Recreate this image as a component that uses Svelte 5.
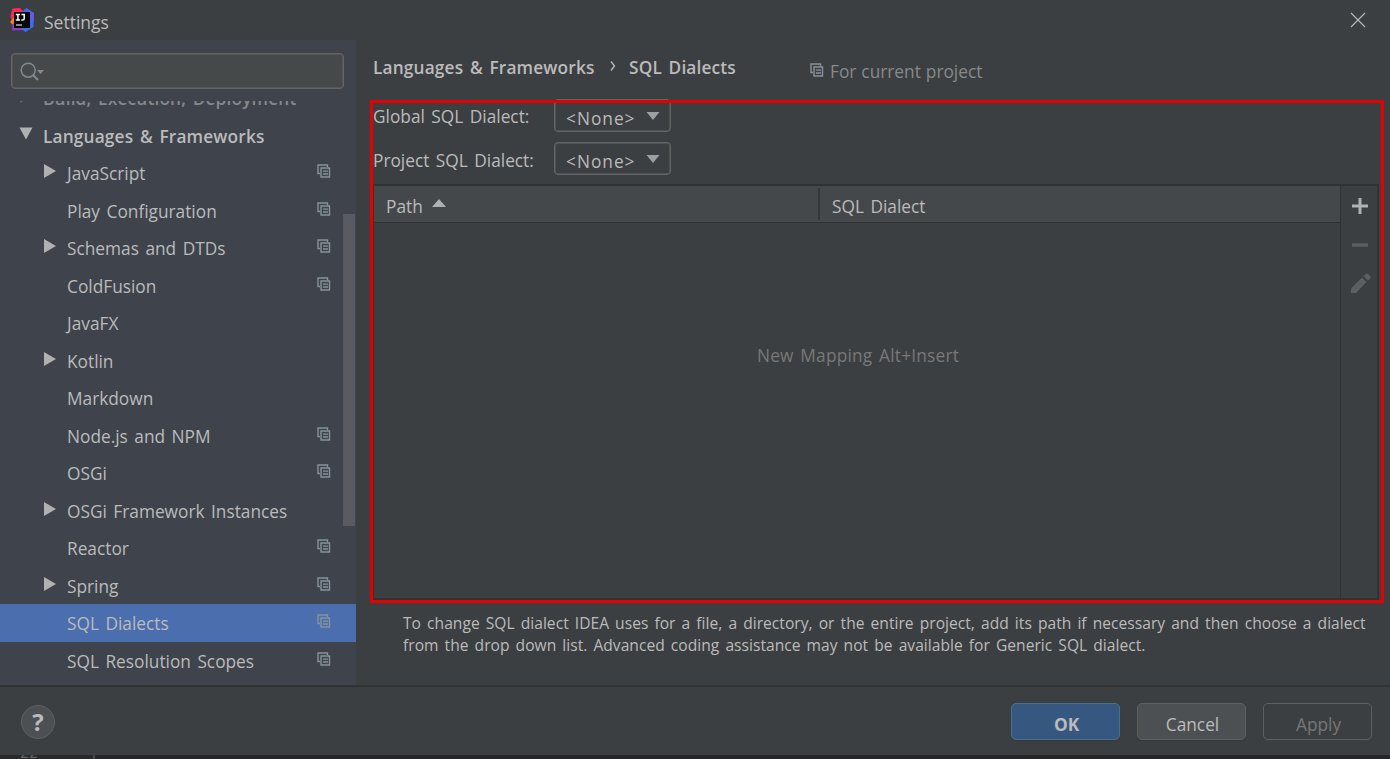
<script>
	const tree = [
		{ name: 'Build, Execution, Deployment', top: true, arrow: 'right' },
		{ name: 'Languages & Frameworks', top: true, arrow: 'down' },
		{ name: 'JavaScript', arrow: 'right', project: true },
		{ name: 'Play Configuration', project: true },
		{ name: 'Schemas and DTDs', arrow: 'right', project: true },
		{ name: 'ColdFusion', project: true },
		{ name: 'JavaFX' },
		{ name: 'Kotlin', arrow: 'right' },
		{ name: 'Markdown' },
		{ name: 'Node.js and NPM', project: true },
		{ name: 'OSGi', project: true },
		{ name: 'OSGi Framework Instances', arrow: 'right' },
		{ name: 'Reactor', project: true },
		{ name: 'Spring', arrow: 'right', project: true },
		{ name: 'SQL Dialects', project: true },
		{ name: 'SQL Resolution Scopes', project: true }
	];
	const dialects = [
		{ label: 'Global SQL Dialect:', value: '<None>' },
		{ label: 'Project SQL Dialect:', value: '<None>' }
	];

	let selected = $state('SQL Dialects');
</script>

{#snippet copyIcon()}
	<svg class="copy" width="14" height="14" viewBox="0 0 14 14" fill="none" stroke="#87939a">
		<path d="M3 9.5H1V1H10.5V3" stroke-width="1.4" />
		<path d="M4 4H12.5V13H4Z" stroke-width="1.4" />
		<path d="M6 7.2H11M6 10H11" stroke-width="1.3" />
	</svg>
{/snippet}

<div class="window">
	<header class="titlebar">
		<svg class="logo" width="24" height="24" viewBox="0 0 24 24">
			<path d="M2.5 0.5L10 0L14 4L12 12L2 14L0.5 8Z" fill="#fe2857" />
			<path d="M0 14L4 9.5L8 15L4 18Z" fill="#fc801d" />
			<path d="M2.5 16L12 12L13 22L2 22.5Z" fill="#9039c8" />
			<path d="M12 4L16.5 0L24 5L23.5 19L15.5 24L10 20Z" fill="#3b6cf0" />
			<path d="M18 2L23.5 5L23.5 14L19 9Z" fill="#6b57e8" />
			<rect x="4" y="4" width="16" height="16" fill="#050505" />
			<path d="M5.8 6.5H10M7.9 6.5V12M5.8 12H10M11.5 6.5H14.2V10.5Q14.2 12 12.8 12H11.3" fill="none" stroke="#fff" stroke-width="1.5" />
			<path d="M6 17H12" stroke="#ddd" stroke-width="1.2" />
		</svg>
		<span class="title">Settings</span>
		<svg class="close" width="16" height="16" viewBox="0 0 16 16">
			<path d="M1 1L15 15M15 1L1 15" stroke="#b4b6b7" stroke-width="1.2" />
		</svg>
	</header>

	<div class="content">
		<aside>
			<div class="search">
				<svg width="25" height="20" viewBox="0 0 25 20" fill="none">
					<circle cx="8.2" cy="8.2" r="7" stroke="#7f8b91" stroke-width="1.5" />
					<path d="M13 13L18 18" stroke="#7f8b91" stroke-width="2" />
					<path d="M17 8H24L20.5 12Z" fill="#7f8b91" />
				</svg>
			</div>
			<div class="viewport">
				<div class="tree">
					{#each tree as item}
						<!-- svelte-ignore a11y_click_events_have_key_events, a11y_no_static_element_interactions -->
						<div class="row" class:top={item.top} class:selected={item.name === selected} onclick={() => (selected = item.name)}>
							<span class="arrow">
								{#if item.arrow === 'right'}
									<svg width="14" height="14" viewBox="0 0 14 14"><path d="M1 0V14L13 7Z" fill="#afb1b3" /></svg>
								{:else if item.arrow === 'down'}
									<svg width="14" height="14" viewBox="0 0 14 14"><path d="M0.5 0.5H13.5L7 12.5Z" fill="#afb1b3" /></svg>
								{/if}
							</span>
							<span class="name">{item.name}</span>
							{#if item.project}
								{@render copyIcon()}
							{/if}
						</div>
					{/each}
				</div>
				<div class="scroll"></div>
			</div>
		</aside>

		<main>
			<div class="crumbs">
				<b class="group">Languages &amp; Frameworks</b>
				<svg class="sep" width="6" height="10" viewBox="0 0 6 10"><path d="M1 0.5L4.5 5L1 9.5" fill="none" stroke="#bbb" stroke-width="1.3" /></svg>
				<b class="page">SQL Dialects</b>
				<span class="scope">{@render copyIcon()}<span>For current project</span></span>
			</div>

			<div class="form">
				{#each dialects as d}
					<div class="field">
						<span class="label">{d.label}</span>
						<div class="combo">
							<span>{d.value}</span>
							<svg width="14" height="8" viewBox="0 0 14 8"><path d="M0.5 0H13.5L7 8Z" fill="#9da0a2" /></svg>
						</div>
					</div>
				{/each}
			</div>

			<div class="table">
				<div class="grid">
					<div class="head">
						<div class="path">
							<span>Path</span>
							<svg width="14" height="8" viewBox="0 0 14 8"><path d="M0 8H14L7 0Z" fill="#afb1b3" /></svg>
						</div>
						<div class="dialect">SQL Dialect</div>
					</div>
					<div class="empty">New Mapping Alt+Insert</div>
				</div>
				<div class="tools">
					<svg width="20" height="20" viewBox="0 0 20 20"><path d="M10 2V18M2 10H18" stroke="#afb1b3" stroke-width="3" /></svg>
					<svg width="20" height="20" viewBox="0 0 20 20"><path d="M2 10H18" stroke="#5c5e60" stroke-width="3.4" /></svg>
					<svg width="22" height="22" viewBox="0 0 22 22" fill="#5c5e60"><path d="M1 16.5L12 5.5L16.5 10L6 21H1Z" /><path d="M13.5 4L15.5 2Q17 0.8 18.5 2.3L20.2 4Q21.3 5.3 20 6.7L18 8.5Z" /></svg>
				</div>
			</div>

			<p class="hint">
				<span>To change SQL dialect IDEA uses for a file, a directory, or the entire project, add its path if necessary and then choose a dialect</span>
				<span>from the drop down list. Advanced coding assistance may not be available for Generic SQL dialect.</span>
			</p>
			<div class="frame"></div>
		</main>
	</div>

	<footer>
		<button class="help">?</button>
		<button class="btn ok">OK</button>
		<button class="btn">Cancel</button>
		<button class="btn apply">Apply</button>
	</footer>
	<div class="behind">
		<div class="gutter"><span>22</span></div>
	</div>
</div>

<style>
	:global(body) {
		margin: 0;
		overflow: hidden;
	}
	.window {
		width: 1390px;
		height: 759px;
		display: flex;
		flex-direction: column;
		background: #3c3f41;
		color: #bbbbbb;
		font-family: "Open Sans", "Noto Sans", sans-serif;
		font-size: 17.3px;
		word-spacing: 2px;
		white-space: nowrap;
		overflow: hidden;
	}
	svg {
		display: block;
		flex: none;
	}
	.titlebar {
		height: 40px;
		display: flex;
		align-items: center;
		padding: 0 24px 0 10px;
	}
	.title {
		margin: 3px auto 0 10px;
		font-size: 17.5px;
	}
	.content {
		display: flex;
		height: 645px;
		border-bottom: 2px solid #323232;
	}
	aside {
		width: 356px;
		display: flex;
		flex-direction: column;
		background: #3e434c;
	}
	.search {
		height: 34px;
		margin: 12.5px 12px 0 11px;
		padding-left: 8px;
		display: flex;
		align-items: center;
		background: #45494a;
		border: 1px solid #646464;
		border-radius: 4px;
		box-shadow: inset 0 0 0 0.5px #646464;
	}
	.search svg {
		margin-top: 2px;
	}
	.viewport {
		position: relative;
		height: 584px;
		margin-top: 12.5px;
		overflow: hidden;
	}
	.tree {
		margin-top: -22px;
	}
	.row {
		height: 37.5px;
		display: flex;
		align-items: center;
		padding: 0 25.5px 0 43px;
	}
	.row.top {
		padding-left: 19px;
		font-weight: 600;
		letter-spacing: 0.15px;
	}
	.row:first-child {
		color: #85888c;
	}
	.row:first-child .arrow {
		opacity: 0.3;
	}
	.row.selected {
		background: #4b6eaf;
	}
	.arrow {
		width: 24px;
		height: 17px;
	}
	.name {
		flex: 1;
		padding-top: 2px;
	}
	.row .copy {
		margin-bottom: 3px;
	}
	.scroll {
		position: absolute;
		right: 1px;
		top: 113px;
		width: 12px;
		height: 312px;
		background: #595b62;
	}
	main {
		position: relative;
		flex: 1;
		display: flex;
		flex-direction: column;
		padding-left: 17px;
	}
	.crumbs {
		height: 59px;
		display: flex;
		align-items: center;
	}
	.crumbs b {
		font-weight: 600;
		letter-spacing: 0.15px;
		margin-bottom: 5px;
	}
	.group {
		width: 221px;
	}
	.sep {
		margin: 0 13px 7px 16px;
	}
	.page {
		width: 181px;
	}
	.scope {
		display: flex;
		align-items: center;
		gap: 6px;
		padding-top: 4px;
		color: #87898a;
		word-spacing: 0.5px;
	}
	.scope .copy {
		margin-bottom: 4px;
	}
	.form {
		display: flex;
		flex-direction: column;
		gap: 10px;
	}
	.field {
		display: flex;
		align-items: center;
	}
	.label {
		width: 181px;
		padding-top: 2px;
	}
	.field:last-child .label {
		padding-top: 4px;
	}
	.combo {
		width: 96px;
		height: 31px;
		display: flex;
		align-items: center;
		justify-content: space-between;
		padding: 0 10px 0 9px;
		border: 1px solid #646464;
		border-radius: 4px;
		box-shadow: inset 0 0 0 0.5px #646464;
	}
	.combo span {
		padding: 5px 0 0 2px;
		letter-spacing: 1px;
	}
	.table {
		width: 1003px;
		height: 412px;
		display: flex;
		margin-top: 9px;
		border: 2px solid #323232;
		border-left-width: 1px;
	}
	.grid {
		flex: 1;
		border-right: 1px solid #323232;
	}
	.head {
		height: 36px;
		display: flex;
		align-items: center;
		background: #45484a;
		border-bottom: 1px solid #323232;
	}
	.path {
		width: 432px;
		height: 32px;
		display: flex;
		align-items: center;
		gap: 9px;
		padding-left: 12px;
		border-right: 2px solid #35383a;
	}
	.path svg {
		margin-bottom: 2px;
	}
	.path span,
	.dialect {
		padding-top: 4px;
	}
	.dialect {
		padding-left: 12px;
	}
	.empty {
		padding: 121px 0 0 2px;
		text-align: center;
		letter-spacing: 0.2px;
		color: #787878;
	}
	.tools {
		width: 34px;
		display: flex;
		flex-direction: column;
		align-items: center;
		gap: 19px;
		padding: 10px 0 0 2px;
	}
	.tools svg:last-child {
		margin: -2px 0 0 2px;
	}
	.hint {
		margin: 12px 0 0 30px;
		display: flex;
		flex-direction: column;
		font-size: 15.6px;
		letter-spacing: 0.02px;
		line-height: 22px;
	}
	.frame {
		position: absolute;
		left: 14px;
		top: 60px;
		width: 1008px;
		height: 497px;
		border: 3px solid #e60000;
		pointer-events: none;
	}
	footer {
		height: 68px;
		display: flex;
		align-items: center;
		gap: 17px;
		padding: 0 18px 0 21px;
	}
	button {
		font-family: inherit;
		font-size: 17.3px;
		color: #bbbbbb;
		padding: 0;
		border: 1px solid #5e6060;
		background: #4c5052;
		box-sizing: border-box;
	}
	.help {
		width: 34px;
		height: 34px;
		margin: 1px auto 0 0;
		border-radius: 50%;
		font-size: 24px;
		line-height: 30px;
		font-weight: 700;
	}
	.btn {
		width: 109px;
		height: 37px;
		padding: 6px 0 0 2px;
		border-radius: 5px;
		box-shadow: 0 1px 1px #35383a;
	}
	.ok {
		background: #365880;
		border-color: #4c708c;
		font-weight: 700;
	}
	.apply {
		background: none;
		color: #777777;
		box-shadow: none;
	}
	.behind {
		height: 4px;
		background: #252525;
		overflow: hidden;
	}
	.gutter {
		width: 73px;
		height: 4px;
		display: flex;
		align-items: flex-end;
		padding-left: 20px;
		border-right: 2px solid #4a4a4a;
		background: #292a2b;
	}
	/* only the feet of the line number show under the dialog */
	.gutter span {
		font-family: "DejaVu Sans Mono", monospace;
		font-size: 15px;
		line-height: 16px;
		margin-bottom: -2px;
		color: #606366;
	}
</style>
